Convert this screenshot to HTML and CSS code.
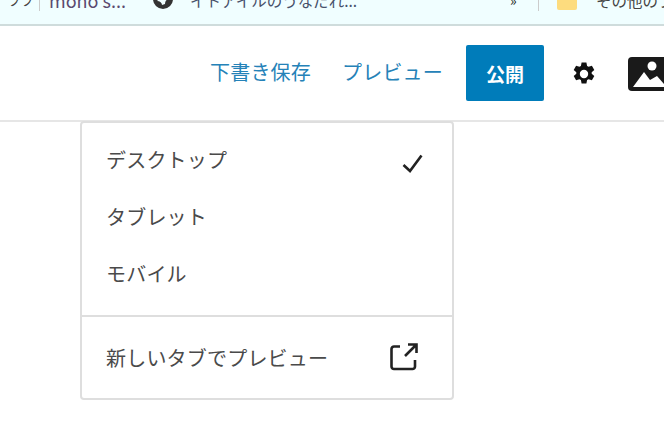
FILE: index.html
```html
<!DOCTYPE html>
<html lang="ja">
<head>
    <meta charset="UTF-8">
    <title>プレビュー</title>
    <link rel="stylesheet" href="styles.css">
</head>
<body>
    <div class="bookmarks">
        <span class="mark mark-first">ブブ</span>
        <span class="sep"></span>
        <span class="mark mark-mono">mono s...</span>
        <svg class="globe" width="22" height="22" viewBox="0 0 22 22">
            <circle cx="11" cy="11" r="10" fill="#333"/>
            <path d="M5 13c3-3 7-4 11-2-2 1-3 3-3 5l-3 1c0-2-2-4-5-4z" fill="#f0feff"/>
        </svg>
        <span class="mark mark-title">イトアイルのうなだれ...</span>
        <span class="more">»</span>
        <span class="sep sep-right"></span>
        <span class="folder"></span>
        <span class="mark mark-other">その他のブ</span>
    </div>

    <header class="toolbar">
        <a class="link link-draft">下書き保存</a>
        <a class="link link-preview">プレビュー</a>
        <button class="publish">公開</button>
        <svg class="gear" width="24" height="26" viewBox="0 0 24 26">
            <path fill-rule="evenodd" fill="#111" d="M9.600 1.500h4.800l.7 3.400 1.500.9 3.300-1.100 2.400 4.200-2.600 2.300v1.600l2.600 2.300-2.400 4.200-3.300-1.100-1.500.9-.7 3.400H9.600l-.7-3.400-1.500-.9-3.300 1.100-2.400-4.200 2.600-2.300v-1.600L1.700 8.900l2.400-4.200 3.300 1.100 1.500-.9zM12 8.800a4.200 4.200 0 1 0 0 8.400 4.200 4.200 0 0 0 0-8.400z"/>
        </svg>
        <svg class="picture" width="36" height="34" viewBox="0 0 36 34">
            <rect x="0" y="0" width="44" height="34" rx="4" fill="#1a1a1a"/>
            <circle cx="24" cy="9" r="4.500" fill="#fff"/>
            <path d="M5 30 L16 15 L22 23 L29 19 L36 27 V30 Z" fill="#fff"/>
        </svg>
    </header>

    <div class="menu">
        <div class="menu-group">
            <div class="menu-item">
                <span>デスクトップ</span>
                <svg class="check" width="24" height="24" viewBox="0 0 24 24">
                    <path d="M3.500 14 L10 20 L21.500 4.500" fill="none" stroke="#222" stroke-width="2.600"/>
                </svg>
            </div>
            <div class="menu-item">タブレット</div>
            <div class="menu-item">モバイル</div>
        </div>
        <div class="menu-group menu-group-last">
            <div class="menu-item">
                <span>新しいタブでプレビュー</span>
                <svg class="external" width="28" height="28" viewBox="0 0 28 28">
                    <path d="M10 3.500H4a2.500 2.500 0 0 0-2.500 2.500v17.500a2.500 2.500 0 0 0 2.500 2.500h18.500a2.500 2.500 0 0 0 2.500-2.500V17" fill="none" stroke="#222" stroke-width="2.600"/>
                    <path d="M15 13 L26 2 M18 1.500h8.500V10" fill="none" stroke="#222" stroke-width="2.600"/>
                </svg>
            </div>
        </div>
    </div>
</body>
</html>
```

FILE: styles.css
```css
* {
    box-sizing: border-box;
}
html, body {
    height: 100%;
}
body {
    margin: 0;
    background-color: #fff;
    color: #1e1e1e;
    font-family: "Noto Sans CJK JP", "Noto Sans", sans-serif;
    overflow: hidden;
}
.bookmarks {
    height: 26px;
    background-color: #f0feff;
    border-bottom: 2px solid #cfdcdc;
    display: flex;
    align-items: flex-end;
    padding: 0 0 15px 8px;
    overflow: hidden;
}
.mark {
    font-size: 15.500px;
    line-height: 18px;
    white-space: nowrap;
    color: #444;
    flex: none;
}
.mark-first {
    width: 31px;
    font-size: 13px;
}
.sep {
    width: 1px;
    height: 14px;
    margin-bottom: -2px;
    background-color: #ccc;
    flex: none;
}
.mark-mono {
    margin-left: 9px;
    width: 103px;
    font-size: 18px;
    color: #5a4a70;
}
.globe {
    flex: none;
    margin-bottom: -1px;
}
.mark-title {
    margin-left: 16px;
    width: 320px;
    color: #46506a;
}
.more {
    width: 28px;
    font-size: 14px;
    line-height: 18px;
    flex: none;
}
.sep-right {
    height: 16px;
}
.folder {
    width: 20px;
    height: 14px;
    margin-left: 18px;
    margin-bottom: -1px;
    background-color: #fddc7e;
    border-radius: 2px;
    flex: none;
}
.mark-other {
    margin-left: 19px;
}
.toolbar {
    height: 96px;
    border-bottom: 2px solid #e6e6e6;
    display: flex;
    align-items: center;
    padding-left: 210px;
    overflow: hidden;
}
.link {
    color: #2582b8;
    font-size: 20px;
    line-height: 28px;
    letter-spacing: .2px;
    margin-bottom: 2px;
    flex: none;
}
.link-preview {
    margin-left: 31px;
}
.publish {
    width: 78px;
    height: 56px;
    margin-left: 23px;
    border: none;
    border-radius: 2px;
    background-color: #007cba;
    color: #fff;
    font-family: inherit;
    font-size: 19px;
    font-weight: 700;
    flex: none;
}
.gear {
    margin: 1px 0 0 28px;
    flex: none;
}
.picture {
    margin: 2px 0 0 32px;
    flex: none;
}
.menu {
    width: 374px;
    height: 279px;
    margin: -1px 0 0 80px;
    border: 2px solid #dedede;
    border-radius: 4px;
    background-color: #fff;
}
.menu-group {
    height: 194px;
    padding-top: 8px;
    border-bottom: 2px solid #dedede;
}
.menu-group-last {
    height: auto;
    padding-top: 12px;
    border-bottom: none;
}
.menu-item {
    height: 57px;
    padding: 0 34px 0 24px;
    display: flex;
    align-items: center;
    justify-content: space-between;
    font-size: 20px;
    letter-spacing: .2px;
    color: #4a4a4a;
}
.check {
    margin: 6px -6px 0 0;
    flex: none;
}
.external {
    margin-bottom: 2px;
    flex: none;
}
```
